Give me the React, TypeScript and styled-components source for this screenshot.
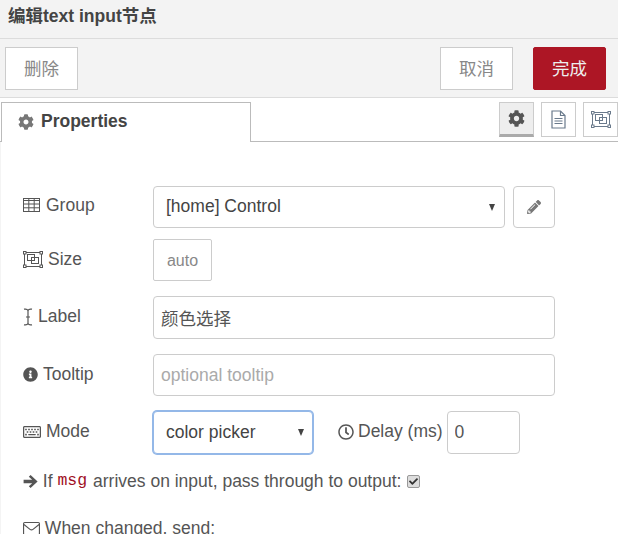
import React from 'react';
import styled, { createGlobalStyle } from 'styled-components';
import { FaCheck, FaCog, FaInfoCircle, FaPencilAlt, FaRegClock, FaRegKeyboard } from 'react-icons/fa';

const GlobalStyle = createGlobalStyle`
  html, body {
    margin: 0;
    padding: 0;
    background: #fff;
  }
  * {
    box-sizing: border-box;
  }
`;

const fontStack = `"Liberation Sans", "Noto Sans CJK SC", Arial, sans-serif`;

const Tray = styled.div`
  width: 618px;
  height: 534px;
  overflow: hidden;
  font-family: ${fontStack};
  font-size: 17.5px;
  color: #555;
  background: #fff;
`;

const Title = styled.div`
  height: 39px;
  padding: 6px 8px 0;
  background: #f3f3f3;
  border-bottom: 1px solid #dcdcdc;
  font-size: 17.5px;
  font-weight: bold;
  line-height: 20px;
  color: #444;
`;

const Toolbar = styled.div`
  height: 59px;
  padding: 8px 12px 0 5px;
  display: flex;
  align-items: flex-start;
  background: #f3f3f3;
  border-bottom: 1px solid #dcdcdc;
`;

const ActionButton = styled.button<{ $primary?: boolean }>`
  width: 73px;
  height: 43px;
  margin-left: ${p => (p.$primary ? '20px' : '0')};
  padding: 0 0 2px;
  border: 1px solid ${p => (p.$primary ? '#ad1625' : '#ccc')};
  border-radius: ${p => (p.$primary ? '2px' : '0')};
  background: ${p => (p.$primary ? '#ad1625' : '#fff')};
  color: ${p => (p.$primary ? '#eee' : '#888')};
  font-family: ${fontStack};
  font-size: 17.5px;
`;

const Spacer = styled.div`
  flex: 1;
`;

const TabBar = styled.div`
  height: 44px;
  padding: 4px 0 0 1px;
  display: flex;
  justify-content: space-between;
  border-bottom: 1px solid #bbb;
`;

const Tab = styled.div`
  width: 250px;
  height: 40px;
  padding: 0 0 2px 16px;
  display: flex;
  align-items: center;
  gap: 7px;
  background: #fff;
  border: 1px solid #bbb;
  border-bottom: none;
  font-size: 17.5px;
  font-weight: bold;
  color: #444;
  svg {
    color: #777;
    font-size: 16px;
  }
`;

const TabButtons = styled.div`
  width: 119px;
  display: flex;
  gap: 7px;
  flex-shrink: 0;
`;

const TabButton = styled.div<{ $active?: boolean }>`
  width: 35px;
  height: 35px;
  flex-shrink: 0;
  display: flex;
  align-items: center;
  justify-content: center;
  background: ${p => (p.$active ? '#eee' : '#fff')};
  border: 1px solid #ccc;
  border-bottom: ${p => (p.$active ? '3px solid #aaa' : '1px solid #ccc')};
  color: ${p => (p.$active ? '#555' : '#6a7a8c')};
  font-size: 17px;
`;

const Form = styled.div`
  padding: 44px 0 0 22px;
  border-left: 1px solid #f4f4f4;
`;

const Row = styled.div<{ $after?: number }>`
  display: flex;
  align-items: center;
  margin-bottom: ${p => p.$after ?? 15}px;
`;

const FieldLabel = styled.label<{ $raised?: boolean }>`
  width: 130px;
  flex-shrink: 0;
  display: flex;
  align-items: center;
  gap: 5px;
  margin-bottom: ${p => (p.$raised ? 4 : 2)}px;
  color: #555;
  svg {
    flex-shrink: 0;
    color: #555;
  }
`;

const SelectWrap = styled.div<{ $width: number }>`
  position: relative;
  width: ${p => p.$width}px;
  flex-shrink: 0;
`;

const Select = styled.select<{ $focused?: boolean }>`
  display: block;
  width: 100%;
  height: ${p => (p.$focused ? 43 : 42)}px;
  padding: 0 8px ${p => (p.$focused ? 1 : 3)}px 12px;
  appearance: none;
  background-color: #fff;
  border: 1px solid ${p => (p.$focused ? '#94b8e8' : '#ccc')};
  border-radius: 4px;
  box-shadow: ${p => (p.$focused ? '0 0 0 1px #94b8e8' : 'none')};
  color: #444;
  font-family: ${fontStack};
  font-size: 17.5px;
  outline: none;
`;

const Caret = styled.span<{ $right: number }>`
  position: absolute;
  top: 18px;
  right: ${p => p.$right}px;
  width: 0;
  height: 0;
  border-left: 3.5px solid transparent;
  border-right: 3.5px solid transparent;
  border-top: 7px solid #444;
  pointer-events: none;
`;

const TextInput = styled.input<{ $width: number; $height?: number }>`
  width: ${p => p.$width}px;
  height: ${p => p.$height ?? 42}px;
  padding: 0 7px;
  border: 1px solid #ccc;
  border-radius: 4px;
  color: #555;
  font-family: ${fontStack};
  font-size: 17.5px;
  outline: none;
  &::placeholder {
    color: #aaa;
    opacity: 1;
  }
`;

const EditButton = styled.div`
  width: 42px;
  height: 42px;
  margin-left: 8px;
  display: flex;
  align-items: center;
  justify-content: center;
  border: 1px solid #ccc;
  border-radius: 4px;
  color: #777;
  font-size: 14px;
`;

const SizeButton = styled.div`
  width: 59px;
  height: 42px;
  padding-top: 1px;
  display: flex;
  align-items: center;
  justify-content: center;
  border: 1px solid #ccc;
  border-radius: 2px;
  color: #888;
  font-size: 16px;
`;

const DelayLabel = styled.label`
  margin: 0 4px 2px 25px;
  display: flex;
  align-items: center;
  gap: 4px;
  color: #555;
  svg {
    color: #555;
    font-size: 16px;
  }
`;

const TextLine = styled.div<{ $after?: number }>`
  display: flex;
  align-items: center;
  height: 20px;
  margin-bottom: ${p => p.$after ?? 0}px;
  white-space: pre;
  line-height: 24px;
  color: #555;
  svg {
    flex-shrink: 0;
  }
`;

const Code = styled.code`
  font-family: "Liberation Mono", monospace;
  font-size: 16.5px;
  margin-right: 1px;
  color: #a00f24;
`;

const CheckMark = styled.span`
  width: 13px;
  height: 13px;
  margin-left: 6px;
  display: inline-flex;
  align-items: center;
  justify-content: center;
  background: #ddd;
  border: 1px solid #999;
  border-radius: 2px;
  color: #333;
  font-size: 9px;
`;

const SizeIcon: React.FC = () => (
  <svg width="20" height="17" viewBox="0 0 20 17" fill="none" stroke="currentColor">
    <rect x="1.5" y="1.5" width="17" height="14" strokeWidth="1" />
    <rect x="4.5" y="3.5" width="7" height="6" strokeWidth="1" />
    <rect x="8.5" y="6.5" width="7" height="6" strokeWidth="1" />
    <rect x="0.5" y="0.5" width="2.5" height="2.5" fill="#fff" strokeWidth="1" />
    <rect x="17" y="0.5" width="2.5" height="2.5" fill="#fff" strokeWidth="1" />
    <rect x="0.5" y="14" width="2.5" height="2.5" fill="#fff" strokeWidth="1" />
    <rect x="17" y="14" width="2.5" height="2.5" fill="#fff" strokeWidth="1" />
  </svg>
);

const TableIcon: React.FC = () => (
  <svg width="18" height="15" viewBox="0 0 18 15" fill="none" stroke="currentColor" strokeWidth="1">
    <rect x="0.5" y="0.5" width="16" height="13" />
    <path d="M1 2.5H16M1 6H16M1 9.8H16M5.8 1V13M11.2 1V13" />
  </svg>
);

const CursorIcon: React.FC = () => (
  <svg width="10" height="18" viewBox="0 0 10 18" fill="none" stroke="currentColor" strokeWidth="1.2">
    <path d="M1 1.2C3 0.8 4.5 1.2 5 2.6C5.5 1.2 7 0.8 9 1.2M5 2.6V15.4M1 16.8C3 17.2 4.5 16.8 5 15.4C5.5 16.8 7 17.2 9 16.8M3 9H7" />
  </svg>
);

const ArrowIcon: React.FC = () => (
  <svg width="15" height="15" viewBox="0 0 15 15" fill="currentColor">
    <path d="M7.6 1L14.6 7.5L7.6 14L5.8 12.2L9.2 9.2H0.6V5.8H9.2L5.8 2.8Z" />
  </svg>
);

const EnvelopeIcon: React.FC = () => (
  <svg width="17" height="15" viewBox="0 0 18 15" fill="none" stroke="currentColor" strokeWidth="1.2">
    <rect x="0.6" y="1.1" width="16.8" height="12.8" rx="1.2" />
    <path d="M1 3.2L7.4 8.4C8.4 9.2 9.6 9.2 10.6 8.4L17 3.2" />
  </svg>
);

const FileIcon: React.FC = () => (
  <svg width="15" height="19" viewBox="0 0 15 19" fill="none" stroke="currentColor" strokeWidth="1.2">
    <path d="M1 1H9.5L14 5.5V18H1Z" />
    <path d="M9.5 1V5.5H14M3.5 8.5H11.5M3.5 11H11.5M3.5 13.5H11.5" />
  </svg>
);

export default function App() {
  return (
    <Tray>
      <GlobalStyle />
      <Title>编辑text input节点</Title>
      <Toolbar>
        <ActionButton>删除</ActionButton>
        <Spacer />
        <ActionButton>取消</ActionButton>
        <ActionButton $primary>完成</ActionButton>
      </Toolbar>
      <TabBar>
        <Tab>
          <FaCog />
          Properties
        </Tab>
        <TabButtons>
          <TabButton $active>
            <FaCog />
          </TabButton>
          <TabButton>
            <FileIcon />
          </TabButton>
          <TabButton>
            <SizeIcon />
          </TabButton>
        </TabButtons>
      </TabBar>
      <Form>
        <Row $after={11}>
          <FieldLabel $raised>
            <TableIcon />
            Group
          </FieldLabel>
          <SelectWrap $width={352}>
            <Select defaultValue="control">
              <option value="control">[home] Control</option>
            </Select>
            <Caret $right={10} />
          </SelectWrap>
          <EditButton>
            <FaPencilAlt />
          </EditButton>
        </Row>
        <Row>
          <FieldLabel>
            <SizeIcon />
            Size
          </FieldLabel>
          <SizeButton>auto</SizeButton>
        </Row>
        <Row>
          <FieldLabel>
            <CursorIcon />
            Label
          </FieldLabel>
          <TextInput $width={402} $height={43} defaultValue="颜色选择" />
        </Row>
        <Row>
          <FieldLabel>
            <FaInfoCircle size={15} />
            Tooltip
          </FieldLabel>
          <TextInput $width={402} placeholder="optional tooltip" />
        </Row>
        <Row $after={17}>
          <FieldLabel>
            <FaRegKeyboard size={18} />
            Mode
          </FieldLabel>
          <SelectWrap $width={160}>
            <Select $focused defaultValue="color">
              <option value="color">color picker</option>
            </Select>
            <Caret $right={9} />
          </SelectWrap>
          <DelayLabel>
            <FaRegClock />
            Delay (ms)
          </DelayLabel>
          <TextInput $width={73} $height={43} defaultValue="0" />
        </Row>
        <TextLine $after={27}>
          <ArrowIcon />
          {' If '}
          <Code>msg</Code>
          {' arrives on input, pass through to output:'}
          <CheckMark>
            <FaCheck />
          </CheckMark>
        </TextLine>
        <TextLine>
          <EnvelopeIcon />
          {' When changed, send:'}
        </TextLine>
      </Form>
    </Tray>
  );
}
